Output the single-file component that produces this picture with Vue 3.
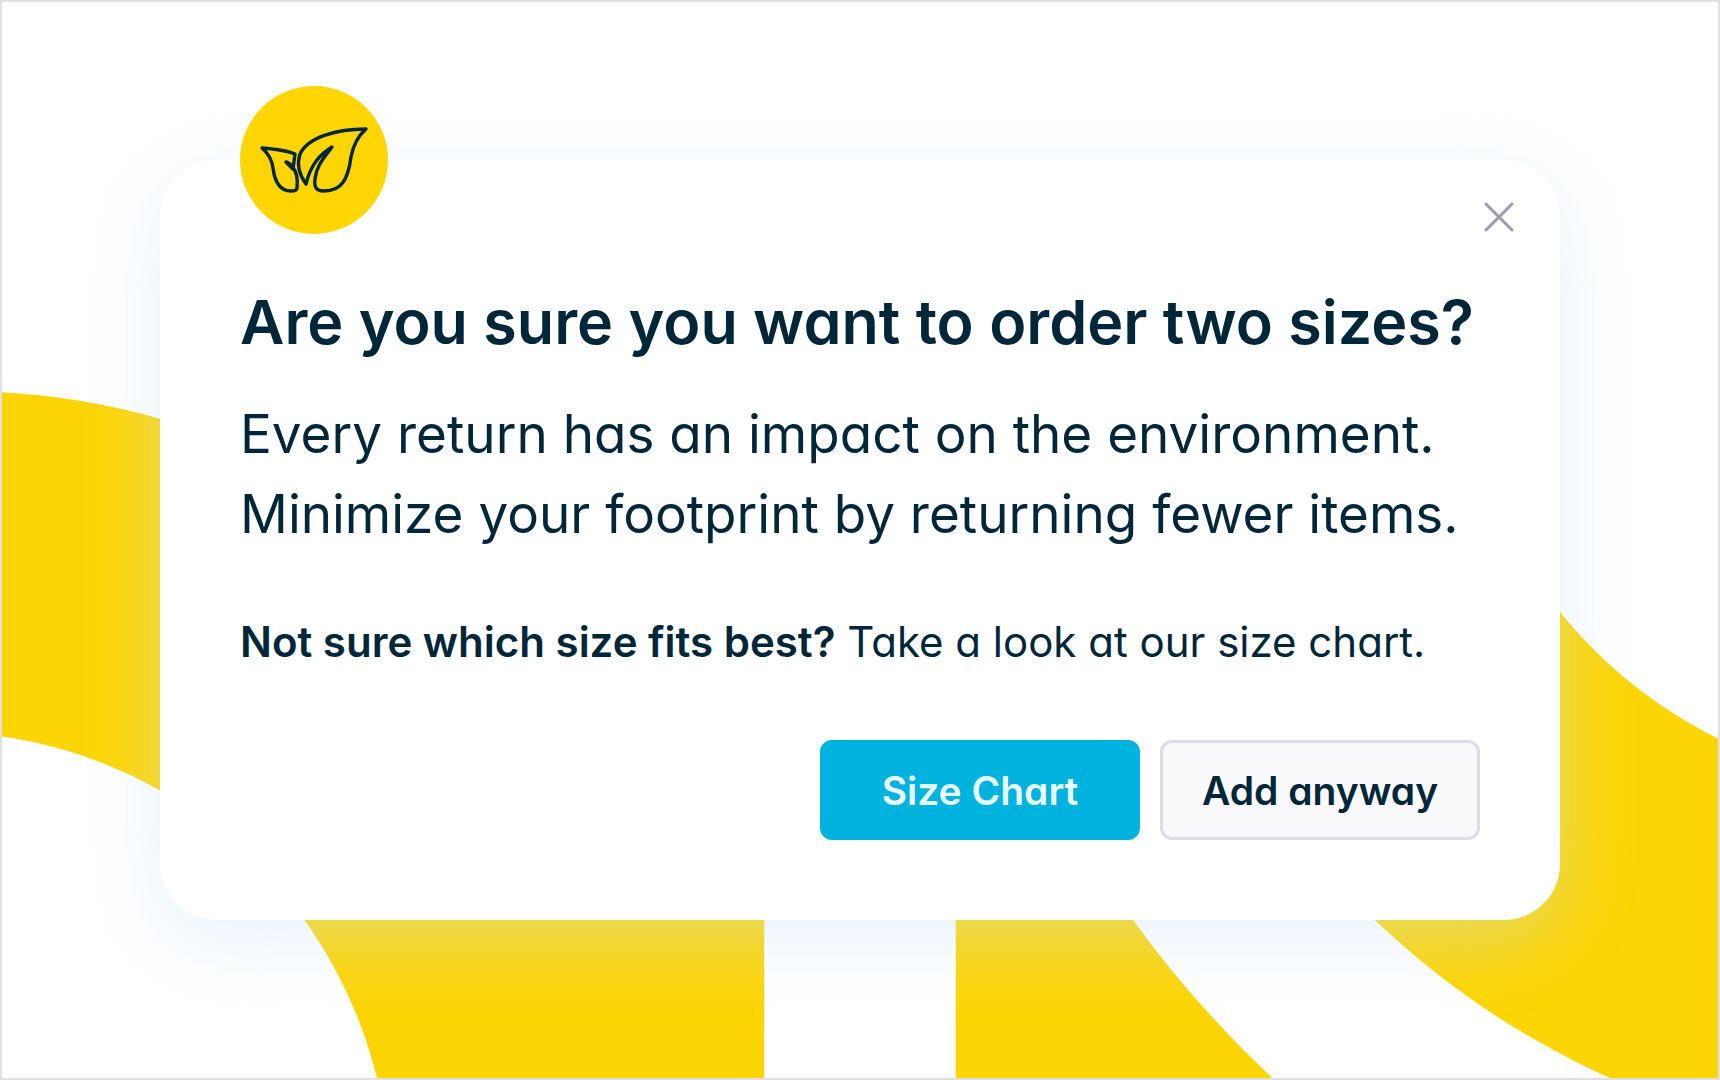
<script setup>
import { ref } from 'vue'

const open = ref(true)
const close = () => {
  open.value = false
}
</script>

<template>
  <main class="page">
    <svg class="backdrop" viewBox="0 0 1720 1080" preserveAspectRatio="xMidYMid slice" aria-hidden="true">
      <path d="M0 392C55 395 107 404 160 419L764 600V1080H376C362 1022 337 968 300 916L160 792C111 764 57 745 0 737Z" />
      <path d="M956 500H1480L1560 610C1606 668 1660 709 1720 739V1080H1613C1520 1038 1442 984 1375 920L1240 780H1050L1133 920C1174 977 1221 1030 1274 1080H956Z" />
    </svg>

    <section v-if="open" class="card" role="dialog" aria-labelledby="dialog-title">
      <div class="badge">
        <svg viewBox="0 0 148 148" aria-hidden="true">
          <path d="M22 62C29 68 32 74 33 82C35 98 41 105 51 105C55 105 57 104 57 102C58 94 57 86 52 80C50 78 48 76 46 76L53 83L55 68C46 64 34 63 22 62Z" />
          <path d="M66 98C58 87 57 77 60 68C68 51 97 43 126 43C118 50 113 60 111 71C108 93 102 105 84 105C76 105 74 101 75 93C76 81 83 73 92 61C81 68 71 77 66 98Z" />
        </svg>
      </div>
      <button class="close" type="button" aria-label="Close" @click="close">
        <svg viewBox="0 0 30 30" aria-hidden="true"><path d="M2 2L28 28M28 2L2 28" /></svg>
      </button>

      <h1 id="dialog-title">Are you sure you want to order two sizes?</h1>
      <p class="lead">
        Every return has an impact on the environment.<br />
        Minimize your footprint by returning fewer items.
      </p>
      <p class="note"><strong>Not sure which size fits best?</strong> Take a look at our size chart.</p>
      <div class="actions">
        <button class="btn primary" type="button">Size Chart</button>
        <button class="btn secondary" type="button" @click="close">Add anyway</button>
      </div>
    </section>
  </main>
</template>

<style>
body {
  margin: 0;
}
</style>

<style scoped>
.page {
  position: relative;
  box-sizing: border-box;
  min-height: 100vh;
  padding: 158px;
  border: 2px solid #e0e0e0;
  background: #fff;
  color: #00263a;
  font-family: Inter, "Open Sans", sans-serif;
  font-feature-settings: "cv11";
}
.backdrop {
  position: absolute;
  inset: 0;
  width: 100%;
  height: 100%;
  fill: #fdd504;
}
.card {
  position: relative;
  box-sizing: border-box;
  padding: 120px 80px 80px;
  border-radius: 56px;
  background: #fff;
  box-shadow: 0 20px 80px rgba(196, 224, 252, 0.42);
}
.badge {
  position: absolute;
  top: -74px;
  left: 80px;
  width: 148px;
  height: 148px;
  border-radius: 50%;
  background: #ffd504;
}
.badge svg {
  display: block;
  fill: none;
  stroke: #00263a;
  stroke-width: 3.4;
  stroke-linejoin: round;
  stroke-linecap: round;
}
.close {
  position: absolute;
  top: 42px;
  right: 46px;
  width: 30px;
  height: 30px;
  padding: 0;
  border: 0;
  background: none;
  cursor: pointer;
}
.close svg {
  display: block;
  fill: none;
  stroke: #9c98b8;
  stroke-width: 3;
  stroke-linecap: round;
}
h1,
p {
  margin: 0;
}
h1 {
  font-size: 61px;
  font-weight: 600;
  line-height: 84px;
}
.lead {
  margin-top: 30px;
  font-size: 53px;
  line-height: 80px;
}
.note {
  margin-top: 60px;
  font-size: 42px;
  line-height: 56px;
}
.note strong {
  font-weight: 600;
}
.actions {
  display: flex;
  justify-content: flex-end;
  gap: 20px;
  margin-top: 70px;
}
.btn {
  box-sizing: border-box;
  width: 320px;
  height: 100px;
  padding: 0;
  border: 3px solid transparent;
  border-radius: 12px;
  font: inherit;
  font-feature-settings: inherit;
  font-size: 39px;
  font-weight: 600;
  cursor: pointer;
}
.primary {
  border-color: #00b2de;
  background: #00b2de;
  color: #e9fcff;
}
.secondary {
  border-color: #dddcea;
  background: #f9f9fc;
  color: #00263a;
}
</style>
